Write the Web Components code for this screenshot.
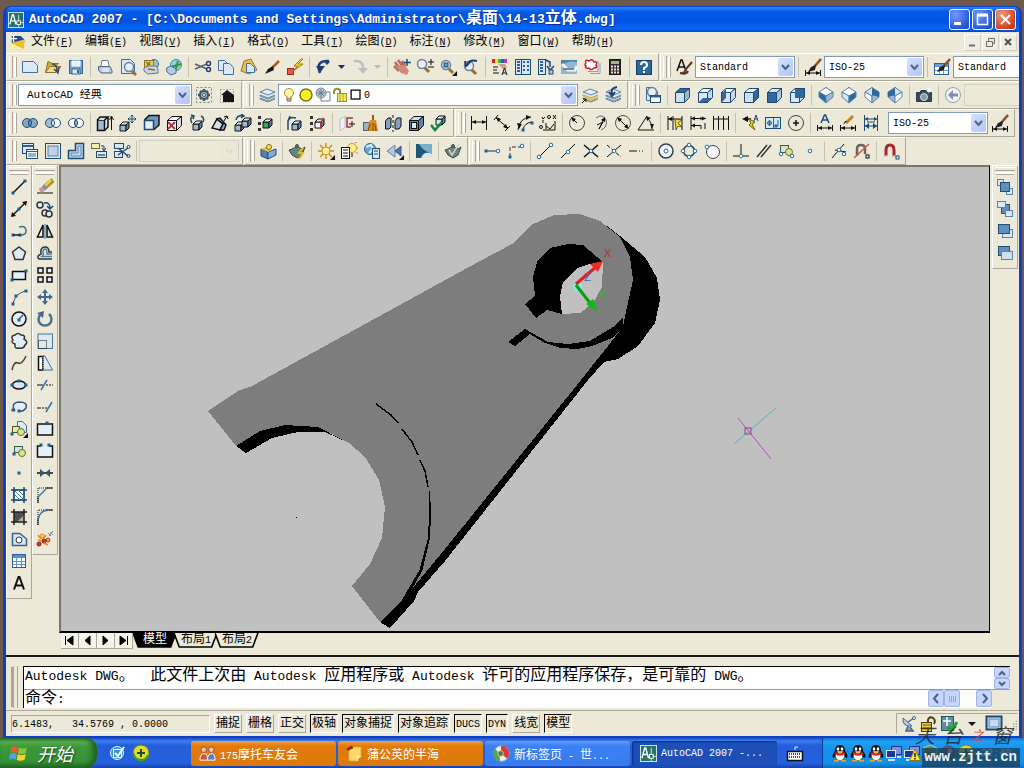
<!DOCTYPE html>
<html lang="zh-CN">
<head>
<meta charset="UTF-8">
<meta name="viewport" content="width=device-width, initial-scale=1">
<title>AutoCAD 2007</title>
<style>
    html, body {
        margin: 0;
        min-height: 100vh;
    }
    body {
        font-family: "Liberation Mono", "Noto Sans CJK SC", monospace;
        background: #6d5a4c;
        overflow: hidden;
    }
    cad-app {
        --face: #ece9d8;
        --shade: #aca899;
        --xp: #0a55e4;
    }
</style>
</head>
<body>
<cad-app></cad-app>

<script>
// ---------- icon helpers ----------
const NAVY = '#1d4a73', MID = '#5b84ad', PALE = '#cfe0ef', INK = '#111';
const p = (d, s = INK, w = 1, f = 'none') => `<path d="${d}" stroke="${s}" stroke-width="${w}" fill="${f}"/>`;
const fill = (d, f) => `<path d="${d}" fill="${f}"/>`;
const c = (x, y, r, s = INK, f = 'none', w = 1) => `<circle cx="${x}" cy="${y}" r="${r}" stroke="${s}" fill="${f}" stroke-width="${w}"/>`;
const r = (x, y, w, h, s = INK, f = 'none', sw = 1) => `<rect x="${x}" y="${y}" width="${w}" height="${h}" stroke="${s}" fill="${f}" stroke-width="${sw}"/>`;
const dot = (x, y) => `<rect x="${x - 1.5}" y="${y - 1.5}" width="3" height="3" fill="#1b6391"/>`;
const node = (x, y) => c(x, y, 1.8, '#1f6ea5', '#fff');
const cube = (f = PALE, t = '#fff', s = '#9dbad4', k = NAVY) =>
    p('M2.500 6.500H11.500V16.500H2.500Z', k, 1, f) + p('M2.500 6.500L7 2.500H16.500L11.500 6.500Z', k, 1, t) + p('M11.500 6.500L16.500 2.500V11.500L11.500 16.500Z', k, 1, s);
const mini = (x, y, f = '#9dbad4') =>
    p(`M${x} ${y + 3}h6v6h-6Z`, INK, 1, f) + p(`M${x} ${y + 3}l3-3h6l-3 3Z`, INK, 1, '#dce8f2') + p(`M${x + 6} ${y + 3}l3-3v6l-3 3Z`, INK, 1, '#5b84ad');
const iso = (a, b, d) => p('M9 1.500L16 7.500L9 16.500L2 7.500Z', NAVY, 1, '#fff')
    + p('M9 1.500L16 6L9 10L2 6Z', MID, 1, a) + p('M2 6L9 10V17L2 11Z', MID, 1, b) + p('M16 6L9 10V17L16 11Z', MID, 1, d);
const wand = x => p('M17 1L10 9', '#8a4f26', 2.500) + fill('M12 7L7 9L4 14L11 12Z', '#222') + x;
const hdim = (y = 14) => p(`M1.500 ${y - 3}v6M16.500 ${y - 3}v6M2 ${y}h14`) + fill(`M2 ${y}l4-2v4ZM16 ${y}l-4-2v4Z`, INK);
const flyout = fill('M18 13V18H13Z', INK);
const star = p('M9 1V17M1 9H17M3 3L15 15M15 3L3 15', '#d28a12', 1.500);
const rings = (a, b, m) => c(6, 9, 4.500, NAVY, a) + c(12, 9, 4.500, NAVY, b) + p('M9 5.600A4.500 4.500 0 0 1 9 12.400A4.500 4.500 0 0 1 9 5.600', NAVY, 1, m);
const lens = (x, y) => p(`M${x + 2} ${y + 3}L${x + 7} ${y + 8}`, '#a56a32', 3) + c(x, y, 4.500, '#69839c', '#e4f0fa', 1.500);
const doc = (x, y, w, h) => p(`M${x} ${y}h${w - 4}l4 4v${h - 4}h-${w}Z`, '#3f6f9a', 1, '#dbe9f6');
const layers = p('M2 6L9 3L17 6L10 9Z', MID, 1, '#e3eefa') + p('M2 9L10 12L17 9M2 12L10 15L17 12M2 9V10L10 13L17 10M2 12V13L10 16L17 13', '#6285a8');
const penguin = fill('M9 1C5 1 4 4 4 7C2 9 1 12 2 14L4 13C5 16 13 16 14 13L16 14C17 12 16 9 14 7C14 4 13 1 9 1Z', '#111')
    + `<ellipse cx="9" cy="12" rx="4.500" ry="4" fill="#fff"/><ellipse cx="7" cy="5" rx="1.300" ry="1.800" fill="#fff"/><ellipse cx="11" cy="5" rx="1.300" ry="1.800" fill="#fff"/>`
    + fill('M5 7H13L9 9Z', '#f7a416') + p('M4 9Q9 12 14 9', '#d8281c', 2.500) + fill('M3 16H8V17.500H3ZM10 16H15V17.500H10Z', '#f7a416');
const monitors = r(6.500, 2.500, 10, 8, '#27348c', '#7d93e0') + r(1.500, 6.500, 9, 7, '#dfe6fa', '#27348c') + p('M3 16H10M12 13H16', '#d7ddee', 2);

const ICONS = {
    app: r(.5, .5, 17, 17, '#d7efe7', '#27736c') + p('M2 14L5 3H6L9 14M3 10H8', '#fff', 1.500) + p('M12 3V12H17M8 12H12V17', '#d8efe9') + r(10, 10, 4, 4, '#fff', '#27736c'),
    doc: fill('M2 1H12L16 5V9H2Z', '#1d4a91') + fill('M1 9L16 5V16H1Z', '#f3c02c') + fill('M1 9L16 16H1Z', '#fff2b0') + p('M4 1V8M1 4H8', '#fff', 1.500),
    new: doc(1.500, 3.500, 15, 11),
    open: fill('M1 14L4 3L8 5H14L12 8Z', '#d2ad3c') + p('M1.500 14.500L4 3.500L8 5.500H14.500L12 8', '#8f7430') + p('M1.500 14.500L6 8.500H17L12 14.500Z', '#8f7430', 1, '#f5de86') + p('M8 6Q13 6 13 13M10 11L14 15L15 9', '#3c4a60', 1.500),
    save: r(2.500, 2.500, 13, 13, '#35659a', '#78a2cc') + r(5, 3, 8, 5, '#fff', '#e8f1fa') + r(5, 11, 8, 5, '#35659a', '#dfeaf5') + fill('M10 12H12V15H10Z', '#35659a'),
    print: p('M5 8L6 2.500H12L13 8', '#697992', 1, '#fff') + p('M2.500 8.500H14L16 12.500V15H5L2.500 12Z', '#53648a', 1, '#b9c6dd') + p('M6 11H13M6 13H13', '#fff'),
    preview: doc(2.500, 1.500, 13, 14) + lens(10, 9),
    publish: c(12, 6, 4.500, '#436b80', '#8dc8df') + r(2.500, 2.500, 9, 7, '#8a7030', '#f0d24a') + p('M2 10L6 8H14L16 11V15L6 16L2 13Z', '#67748a', 1, '#ccd6e6') + p('M4 4L8 7M8 4L5 8M6 11L13 12', '#8e6a1e', 1.500),
    dwf: c(11, 7, 5.500, '#4c8795', '#8fd6dc') + p('M7 8Q12 9 13 3M11 13Q10 7 16 6', '#39944c', 2) + p('M1.500 10L6 8L11 11V15L6 17L2 14Z', '#4d6790', 1, '#b6cbe4'),
    cut: p('M1 6L13 11M1 11L13 6', '#51657a', 1.500) + c(14.500, 5.500, 2, '#243f78', 'none', 1.500) + c(14.500, 11.500, 2, '#243f78', 'none', 1.500),
    copy: doc(1.500, 2.500, 10, 10) + doc(6.500, 5.500, 10, 11),
    paste: p('M4 3L11 1L17 12L9 16L1 13Z', '#9f7621', 1, '#e3c061') + doc(6.500, 5.500, 8, 9),
    brush: p('M16 3L9 10', '#b5551f', 2.500) + fill('M10 8L5 11L2 16L11 12Z', '#191919'),
    matchblock: r(1.500, 10.500, 6, 6, '#9c2722', '#e15942') + p('M15 1L8 8H12L6 14L17 6H12L17 1Z', '#a07b06', 1, '#ffd83a'),
    undo: p('M5 15Q0 2 14 3M14 3L11 6', '#1d3e74', 2.500) + fill('M1 8H10L5 15Z', '#1d3e74'),
    redo: p('M3 3Q13 2 12 12', '#bcbfc0', 2.500) + fill('M7 10H17L12 16Z', '#bcbfc0'),
    down: fill('M5 7H12L8.500 11Z', '#1d2d6c'),
    downoff: fill('M5 7H12L8.500 11Z', '#bbb9ad'),
    pan: p('M2 4L7 11M5 2L10 9M9 3L12 8M1 8L6 13', '#b9695c', 2.500) + fill('M3 9L8 15L14 17L16 13L12 7L7 7Z', '#d08a7b') + p('M14 1V8M11 4.500H18', NAVY, 1.500),
    zoomrt: lens(6, 6) + p('M12 4H18M15 1V7M12 9H18', INK),
    zoomwin: lens(7, 7) + r(5, 5, 4, 4, NAVY, '#6d9bd0') + flyout,
    zoomprev: lens(7, 8) + p('M5 8Q6 1 15 3M8 4L4 8L3 3', '#213c70', 2),
    props: fill('M1 1H4V5H1Z', '#e62121') + fill('M4 1H7V5H4Z', '#eee42c') + fill('M7 1H10V5H7Z', '#35b34a') + fill('M10 1H13V5H10Z', '#2b57db') + fill('M13 1H16V5H13Z', '#c23cc1') + fill('M7 6L13 12L16 10L14 6Z', '#d79c85') + p('M2 9H7M2 12H6M2 15H8M11 17L13.500 10L16 17M12 15H15', INK),
    dc: r(1.500, 1.500, 15, 15, NAVY, '#d9e7f5') + p('M7.500 2V17', NAVY) + p('M3 4H6M3 7H6M3 10H6M3 13H6M9 4H11M13 4H15M9 8H11M13 8H15M9 12H11M13 12H15', '#2f62a0', 2),
    palettes: r(1.500, 1.500, 7, 15, NAVY, '#d9e7f5') + p('M3 4H6M3 7H6M3 10H6M3 13H6', '#2f62a0', 2) + p('M9 2L13 4V9', NAVY, 1.500, '#b2cbe5') + p('M10 8L13 12L17 8', NAVY, 1.500) + r(12, 12, 4, 4, NAVY, '#b2cbe5'),
    sheet: fill('M1 2H17V16H1Z', '#91b8d1') + fill('M1 8Q8 2 17 4V2H1Z', '#4c82aa') + p('M2 6L8 12H15L17 8', '#f2f4f4', 3) + p('M3 11H14', '#778894', 2),
    markup: p('M7 15.500H17V5', '#8c9eb1') + p('M5 13.500H15V3', '#8c9eb1') + p('M3 5Q1 1 6 3Q9 0 11 4Q15 3 13 7Q15 10 11 10Q8 13 6 10Q1 11 3 8Q1 7 3 5Z', '#c82032', 1.500, '#fff'),
    calc: r(3.500, 1.500, 11, 15, '#191919', '#302c2c') + fill('M5 3H13V6H5Z', '#9db78c') + p('M5 8.500H13M5 11.500H13M5 14.500H13', '#e9dfd8', 2).replace('/>', ' stroke-dasharray="2 1"/>'),
    help: r(1.500, 2.500, 15, 14, '#153f68', '#2e6799') + p('M6 7Q6 4 9 4Q12 4 12 7Q12 9 9 10V12M9 13V15', '#fff', 2),
    textstyle: p('M2 13L6 2H7L11 13M4 9H9', INK, 1.500) + p('M17 4L11 11Q9 16 5 15Q11 17 13 13', '#5b3720', 2),
    dimstyle: wand(hdim(15)),
    tablestyle: r(1.500, 5.500, 14, 11, '#2f609b', '#fff') + fill('M2 6H15V9H2Z', '#6a9bd4') + p('M2 12.500H15M6.500 6V16M10.500 6V16', '#6a9bd4') + wand(''),
    gear: r(1.500, 1.500, 15, 15, '#72858f').replace('/>', ' stroke-dasharray="2 2"/>') + p('M9 3V15M3 9H15M5 5L13 13M13 5L5 13', '#41576b', 2.500) + c(9, 9, 4, '#41576b', '#a5b7c4', 2) + c(9, 9, 1.500, '#41576b', '#fff'),
    house: r(2.500, 3.500, 13, 13, '#767d80').replace('/>', ' stroke-dasharray="1 2"/>') + fill('M3 9L9 4L16 9V16H5V9Z', '#151515'),
    layers,
    layercur: layers + fill('M2 9L10 12L17 9V12L10 15L2 12Z', '#e1c84d') + p('M1 17L5 13M2 13H5V16', INK),
    layerprev: layers + p('M13 1Q6 2 8 8M5 6L8 10L11 6', '#233f72', 2),
    bulb: c(9, 7, 4.500, '#af8f1f', '#fff7ac') + p('M7 11V15H11V11M7 13H11', '#72705d', 1, '#ddd'),
    sun: c(9, 9, 6, '#7c741f', '#f4ef27', 1.500),
    freeze: p('M7 6H16V15H7Z', '#6f7e8d', 1, '#fff') + c(7, 7, 5, '#7b8b9a', '#bdcbd5') + p('M7 3V11M3 7H11M4 4L10 10M10 4L4 10', '#65798c'),
    lock: p('M3 8V5Q5 1 9 4V8', '#96901d', 2) + r(6.500, 7.500, 9, 8, '#a19419', '#f3e96c') + p('M9 8V15M12 8V15', '#b4a728'),
    swatch: r(3.500, 3.500, 10, 10, INK, '#fff', 1.500),
    union: rings('#82a9c3', '#82a9c3', '#6796b6'),
    subtract: rings('#9dc1d4', '#fff', '#e9f3f8'),
    intersect: rings('#fff', '#fff', '#8db4cd'),
    extrude: p('M1.500 6H8.500V16.500H1.500Z', INK, 1.500, '#9dbad4') + p('M1.500 6L4 3H12L8.500 6M8.500 16.500L12 13V3', INK, 1.500, '#cfe0ef') + p('M15.500 16V3M13.500 6L15.500 2L17.500 6'),
    moveface: mini(1, 8) + p('M13 1V9M9 5H17M11.500 2.500L13 1L14.500 2.500M11.500 7.500L13 9L14.500 7.500M10.500 3.500L9 5L10.500 6.500M15.500 3.500L17 5L15.500 6.500', NAVY),
    offsetface: p('M2.500 6L7 1.500H17V11L12 15.500', INK, 1.500, '#6f9ac0') + r(2.500, 6.500, 9, 9, NAVY, '#e3edf6', 1.500),
    deleteface: cube('#fff', '#fff', '#ddd', INK) + p('M3 8L10 15M10 8L3 15', '#c3293a', 2),
    rotateface: mini(5, 7) + p('M4 9Q1 4 5 2M3 1L6 2L5 5M13 2Q17 4 15 8', NAVY, 1.500),
    taperface: p('M1 14L6 5L12 10L9 16Z', INK, 1.500, '#d2dfeb') + p('M6 5L9 4L15 11L13 16H9L12 10Z', INK, 1.500, '#8da8c2') + p('M13 7L16 2M13 3L16 2L17 5'),
    copyface: mini(1, 8) + mini(8, 4) + p('M2 6Q3 1 9 2M7 0L10 2L7 4', NAVY, 1.500),
    colorface: fill('M1 2H4V5H1ZM1 8H4V11H1ZM1 14H4V17H1Z', '#333') + mini(6, 5, '#2fab58'),
    copyedge: mini(6, 7) + p('M2 16V7Q4 2 10 4M2 7L4 2', NAVY, 1.500),
    coloredge: fill('M1 2H4V5H1ZM1 8H4V11H1ZM1 14H4V17H1Z', '#333') + mini(6, 5, '#fff') + p('M12 15V8L15 4', '#d22f35', 1.500),
    imprint: p('M2 5L7 2V13L2 17Z', '#b5bdd0', 1, '#f6eef5') + p('M15 4H9V13H13', '#9e3441', 1.500) + p('M14 7V13M11 10H17'),
    clean: r(2.500, 8.500, 8, 8, '#536275', '#9db1c7') + p('M12 1V7', '#9b5819', 2) + fill('M9 6H15L17 17H6Z', '#d98b20') + p('M9 10L7 17M12 9V17M14 10L15 17', '#7c4b14'),
    separate: p('M1.500 7L4 4H7V13L5 15H1.500ZM11 7L13 4H17V12L15 15H11Z', INK, 1, '#7fa0bf') + p('M9 1V18', INK).replace('/>', ' stroke-dasharray="3 2"/>'),
    shell: cube('#5f86aa', '#cfe0ef', '#5b84ad', INK) + r(4.500, 8.500, 5, 6, INK, '#dce8f2'),
    check: mini(6, 2, '#d5e3ef') + p('M1 11L5 16L12 8', '#0b8446', 2.500),
    dimlinear: p('M1.500 2V16M16.500 2V16M2 8H16') + fill('M2 8L6 6V10ZM16 8L12 6V10Z', INK),
    dimaligned: p('M1 6L5 1M12 17L17 12M3 4L15 14') + fill('M3 3L8 5L5 8ZM15 15L10 13L13 10Z', INK),
    dimarc: p('M2 16Q3 4 15 3M7 16Q8 9 16 8') + fill('M3 15L1 9L6 10ZM15 3L10 1V6Z', INK) + dot(7, 16) + dot(16, 9),
    dimord: p('M4 16H16V7M7 15V9M7 12L11 15L15 10M4 6V9M3 3L4 5L6 3M14 1L17 5M17 1L14 5') + c(10, 3, 1.500) + c(2, 13, 1.500),
    dimradius: c(9, 9, 7.500, '#444') + p('M9 9L4 4') + fill('M3 3L8 5L5 8Z', INK),
    dimjog: p('M5 4Q12 -1 15 6Q17 13 10 16', '#666') + p('M6 11L12 8L8 15L13 5') + fill('M14 3L14 8L10 6Z', INK),
    dimdia: c(9, 9, 7.500, '#555') + p('M4 4L14 14') + fill('M3 3L8 5L5 8ZM15 15L10 13L13 10Z', INK),
    dimang: p('M1 16H17M1 16L10 2M10 4Q15 8 15 15') + fill('M9 2L14 4L10 7ZM15 15L13 10H17Z', INK),
    qdim: p('M2 2V16M7 2V16M16 2V16M2 5H16') + fill('M2 5L6 3V7Z', INK) + p('M9 5L16 6L12 9L16 13L12 12L10 16Z', '#6b5b08', 1, '#efdb2c'),
    dimbase: p('M2 2V16M12 3V6M16 9V15M2 4.500H17M2 11.500H12V15') + fill('M2 4.500L6 2.500V6.500ZM17 4.500L13 2.500V6.500ZM2 11.500L6 9.500V13.500Z', INK),
    dimcont: p('M1.500 2V16M6.500 2V16M11.500 2V16M16.500 2V16M2 5H16'),
    leader: fill('M1 5L7 2V8Z', INK) + p('M4 5H10', INK, 1.500) + p('M8 5L14 8L11 10L14 16L8 11L10 9Z', '#6b5b08', 1, '#e8d52c') + p('M13 7L15 1L17 7M14 5H17', NAVY),
    tolerance: r(1.500, 3.500, 15, 11, NAVY, '#d6e6f5') + p('M9.500 4V14M3 9H8M5.500 6V12M14 6V12', '#28669a') + c(5.500, 9, 2, '#28669a') + dot(12, 12),
    center: c(9, 9, 7.500, '#444') + p('M9 6V12M6 9H12', INK, 1.500),
    dimedit: hdim() + p('M5 9L8.500 1H9.500L13 9M6 6H12', '#1f4f7c', 1.500),
    dimtedit: hdim() + p('M14 2L7 9', '#c68220', 3) + fill('M8 7L4 11L6 7Z', INK),
    dimupdate: p('M2.500 1V17M15.500 1V17M3 5H15M3 12H15M5 8H13', NAVY) + fill('M3 12L7 9V15ZM15 12L11 9V15ZM3 5L6 3V7ZM15 5L12 3V7Z', NAVY),
    vpdialog: r(1.500, 1.500, 11, 10, NAVY, '#dceaf7') + p('M2 4H12', '#2f6197', 2) + r(5.500, 7.500, 11, 9, NAVY, '#fff') + p('M6 9.500H16M7 12H15M7 14H15', '#2f6197'),
    vpsingle: r(1.500, 1.500, 15, 15, NAVY) + r(4, 4, 10, 10, MID, '#bdd4e8'),
    vppoly: p('M8.500 1.500H16.500V16.500H1.500V8.500H8.500Z', NAVY, 1.500, '#c5d9ea') + p('M11 4H14V14H4V11H11Z', MID),
    vpobject: r(1.500, 1.500, 8, 5, '#6c6c3a', '#f2efb4') + p('M11 4H14V8M12 6L14 9L16 6', NAVY) + r(6.500, 9.500, 10, 6, NAVY, '#dbe8f4') + p('M8 13H15', MID, 2),
    vpclip: r(1.500, 1.500, 9, 5, NAVY, '#dbe8f4') + r(1.500, 9.500, 8, 6, NAVY, '#dbe8f4') + p('M5 6L15 14M5 13L15 6', NAVY, 1.500) + c(15.500, 5, 1.500, NAVY) + c(15.500, 14, 1.500, NAVY),
    namedview: doc(2.500, 1.500, 11, 13) + lens(8, 6) + r(6.500, 9.500, 10, 7, NAVY, '#fff') + p('M7 10.500H16', '#2f6197', 2),
    vtop: cube(PALE, '#2f689c'), vbottom: cube('#dbe8f3', '#f4f8fb', '#c5d8e8') + fill('M3 16L7 12H16L11 16Z', '#2f689c'),
    vleft: cube('#dbe8f3', '#f4f8fb', '#c5d8e8') + fill('M3 7L7 3V12L3 16Z', '#2f689c'), vright: cube(PALE, '#fff', '#2f689c'),
    vfront: cube('#2f689c', '#e1edf5', '#a9c5dc'), vback: cube('#dbe8f3', '#f4f8fb', '#c5d8e8') + fill('M7 3H16V12H7Z', '#2f689c'),
    iso1: iso('#fff', '#2f689c', '#9dbad4'), iso2: iso('#fff', '#d4e4f0', '#2f689c'),
    iso3: iso('#d4e4f0', '#fff', '#9dbad4') + fill('M9 2L16 6V11L9 9Z', '#2f689c'), iso4: iso('#d4e4f0', '#9dbad4', '#fff') + fill('M9 2L2 6V11L9 9Z', '#2f689c'),
    camera: p('M1.500 6.500H5L6 4.500H11L12 6.500H16.500V15.500H1.500Z', '#273a49', 1, '#394a58') + c(9, 11, 3.500, '#ddd', '#889ba9') + p('M14 1V7M11 4H17M12 2L16 6M16 2L12 6', '#f6fafc'),
    back: c(9, 9, 7.500, '#8f9eb0', '#f2f5f8') + p('M9 9H14', '#8292a5', 3) + fill('M4 9L9 4V14Z', '#8292a5'),
    hide: p('M2 7L9 10V17L2 14Z', '#274e80', 1, '#5380b3') + p('M9 10L17 7V13L9 17Z', '#274e80', 1, '#83acd4') + fill('M2 7L8 4L13 8L9 10Z', '#e3c44b') + c(10, 5, 2.500, '#8d7112', '#f3dd63'),
    render: c(9, 4, 1.500, '#335048', '#69867b') + p('M4 7Q9 3 14 7L17 5L14 13L9 16L4 13L1 8Z', '#335048', 1, '#69867b') + p('M15 6L11 11H15L11 17', '#e2bd28', 2),
    light: star + c(9, 9, 4, '#c99015', '#fff3a2') + flyout,
    lightlist: c(12, 6, 4.500, '#c79b22', '#ffef8e') + r(1.500, 5.500, 8, 11, INK, '#fff') + p('M3 8H8M3 11H8M3 14H8M12 11V15') + p('M16 10L18 12M17 6H18M15 1L17 0', '#d28a12'),
    material: c(7, 7, 5.500, '#286a9c', '#63a5d3') + p('M3 5L8 3L10 7L6 11', '#dcecf7', 2) + r(9.500, 6.500, 7, 10, NAVY, '#dceaf7') + p('M11 9H15M11 12H15', NAVY),
    mapping: p('M1 9L9 3V15Z', '#6980aa', 1, '#b6c6df') + p('M9 9L15 4V14Z', '#3a578d', 1, '#5274ad') + flyout,
    environment: fill('M1 2H17V16H1Z', '#1f567c') + fill('M4 2Q8 9 17 12V2Z', '#78afc4') + fill('M6 16Q9 8 17 12V16Z', '#d9e9ee'),
    advrender: c(9, 4, 1.500, '#335048', '#69867b') + p('M4 7Q9 3 14 7L17 5L14 13L9 16L4 13L1 8Z', '#335048', 1, '#69867b') + p('M5 8L8 13L15 2', '#d2d2c6', 1.500),
    track: p('M3 9H13', '#333') + dot(2, 9) + node(14, 9),
    from: p('M3 15V5H14', '#333').replace('/>', ' stroke-dasharray="4 2"/>') + node(15, 4) + dot(3, 15),
    endpoint: p('M3 15L15 3') + node(15, 3) + node(3, 15),
    midpoint: p('M2 16L16 2') + node(9, 10),
    inters: p('M2 3L16 15M2 15L16 3', INK, 1.500) + node(9, 9),
    appint: p('M2 15L16 3') + p('M2 3L16 15').replace('/>', ' stroke-dasharray="4 2"/>') + node(9, 9),
    ext: p('M1 9H8') + p('M8 9H17').replace('/>', ' stroke-dasharray="1 2"/>'),
    osncenter: c(9, 9, 7, '#35434f', '#eef5fb', 1.500) + c(9, 9, 2, '#1f6ea5', '#fff'),
    quad: c(9, 9, 5.500, '#35434f', 'none', 1.500) + node(9, 3) + node(9, 15) + node(3, 9) + node(15, 9),
    tangent: c(10, 10, 6.500, '#35434f', '#f3f5f6') + node(4, 5),
    perp: p('M1 14H17M9 14V2') + node(9, 14),
    parallel: p('M2 15L12 3M6 15L16 3', '#333', 1.500),
    insertion: r(2.500, 3.500, 8, 7, '#345d4b', '#d8e8c9') + c(11, 10, 3.500, '#637126', '#dfe390') + node(3, 12) + node(14, 14),
    nodesnap: node(9, 9),
    nearest: p('M2 16L14 2M5 8L16 10') + node(9, 8) + node(14, 12),
    none: p('M4 14V7Q4 3 8 3Q12 3 12 7V12', '#6a6560', 2.500) + p('M1 16L16 2', '#d05742', 1.500) + r(13, 13, 3, 3),
    magnet: p('M4 15V8Q4 3 8 3Q12 3 12 8V15', '#a62430', 3) + p('M2.500 14.500H6M10.500 14.500H13.500', '#ddd', 2) + r(14, 14, 3, 3, NAVY),

    line: p('M3 15L15 3', INK, 1.500) + dot(3, 15) + dot(15, 3),
    xline: p('M2 16L16 2', INK, 1.500) + dot(9, 9) + fill('M1 17L2 12L6 16ZM17 1L12 2L16 6Z', INK),
    pline: p('M3 13H10M9 5Q16 3 16 9Q16 13 11 13', '#456c90', 1.500) + dot(3, 13) + dot(10, 13) + p('M3 13H10'),
    polygon: p('M9 3L15.500 8L13 15.500H5L2.500 8Z', '#333', 1.500, '#dce8f3'),
    rectangle: r(2.500, 5.500, 13, 8, INK, '#e4eff9', 1.500) + dot(2, 14) + dot(16, 5),
    arc: p('M3 16Q5 5 16 3', '#445') + dot(3, 16) + dot(6, 8) + dot(16, 3),
    circle: c(9, 9, 7, INK, '#e6eff8', 1.500) + p('M9 9L13 5', '#1b6391', 1.500) + dot(9, 10),
    cloud: p('M5 3Q8 0 11 3Q16 3 14 7Q19 10 15 13Q14 17 9 16Q4 17 5 12Q0 10 3 8Q0 4 5 3Z', '#333', 1.500, '#e3edf6'),
    spline: p('M2 16Q4 7 8 9T16 2', '#444', 1.500),
    ellipse: `<ellipse cx="9" cy="9" rx="6.500" ry="4" stroke="${INK}" stroke-width="1.500" fill="#d6e5f2"/>` + dot(2, 9) + dot(16, 9) + dot(9, 5),
    earc: p('M5 13Q0 5 9 4Q18 4 16 10Q13 14 9 13', '#36577c', 1.500, '#e4eef7') + dot(3, 12) + dot(9, 13),
    insert: doc(7.500, 1.500, 9, 11) + r(2.500, 6.500, 7, 6, '#455b2c', '#e3e9ab') + c(11, 12, 3.500, '#637126', '#dfe390') + dot(2, 14) + flyout,
    block: r(4.500, 4.500, 8, 6, '#345d4b', '#cfe2ea') + c(12, 11, 3.500, '#637126', '#dfe390') + dot(4, 12),
    point: dot(9, 9),
    hatch: r(4, 4, 10, 10, NAVY, '#fff') + p('M4 1V17M14 1V17M1 4H17M1 14H17', NAVY, 1.500) + p('M4 8L10 14M5 5L14 14M8 4L14 10', '#407cad'),
    gradient: fill('M4 4H14V14H4Z', '#4b4f52') + fill('M14 7V14H7Z', '#b6b087') + p('M4 1V17M14 1V17M1 4H17M1 14H17', '#222', 1.500),
    region: p('M2.500 3.500H10L16.500 9V15.500H2.500Z', '#3b658d', 1.500, '#d6e5f2') + c(9, 10, 3, '#333', '#fff'),
    table: r(2.500, 2.500, 13, 13, '#2f5c9c', '#fff') + fill('M3 3H15V6H3Z', '#5b8fd0') + p('M3 9.500H15M3 12.500H15M6.500 6V15M11.500 6V15', '#5b8fd0'),
    mtext: p('M4 15.500L8.500 3H9.500L14 15.500M5.500 11.500H12.500', INK, 2),
    erase: p('M1 15H17') + p('M17 2L9 9', '#b79420', 5) + p('M15 2L9 8', '#f0d65c', 2) + p('M10 8L7 11', '#7996b7', 5) + p('M7 11L4 13', '#d78d88', 5),
    copyobj: c(4, 5, 3, '#333', '#dce8f3', 1.500) + c(9, 13, 3, '#333', '#dce8f3', 1.500) + c(13, 14, 3, '#333', '#dce8f3', 1.500) + p('M8 3Q14 2 14 8M11 6L14 9L17 6', NAVY, 1.500),
    mirror: p('M7 3V15H1.500Z', INK, 1.500, '#eef5fa') + p('M11 3V15H16.500Z', INK, 1.500, '#cfe0ef') + p('M9 2V17', '#2874ab'),
    offset: p('M16 15H3Q0 12 5 10Q4 3 9 3Q13 3 13 8H16', '#333', 1.500) + p('M16 12.500H6Q8 11 7 8Q7 5 9 5Q11 5 11 10H16', '#4681ac', 1.500),
    array: r(2, 2, 5, 5, INK, '#e4eff9', 1.500) + r(11, 2, 5, 5, INK, '#e4eff9', 1.500) + r(2, 11, 5, 5, INK, '#e4eff9', 1.500) + r(11, 11, 5, 5, INK, '#e4eff9', 1.500),
    move: p('M9 3V15M3 9H15', '#3f6b95', 2) + fill('M9 1L12 5H6ZM9 17L12 13H6ZM1 9L5 6V12ZM17 9L13 6V12Z', '#3f6b95'),
    rotate: p('M5 4A6.500 6.500 0 1 0 13 4', '#4b7196', 2.500) + fill('M1 3L8 1L7 8Z', '#3f6b95'),
    scale: r(2, 2, 14.500, 14.500, '#4b7196', '#dce9f5') + r(2.500, 8.500, 8, 8).replace('/>', ' stroke-dasharray="1 1"/>'),
    stretch: p('M2.500 2.500H7V16H2.500Z', INK, 1.500, '#fff') + p('M9 2L16.500 16H7V2Z', '#4b7196', 1, '#dce9f5') + p('M7 2V16').replace('/>', ' stroke-dasharray="1 1"/>'),
    trim: p('M1 9H7') + p('M10 9H17').replace('/>', ' stroke-dasharray="2 1"/>') + p('M5 14L11 4', '#3276ac', 1.500),
    extend: p('M1 10H5') + p('M6 10H12').replace('/>', ' stroke-dasharray="2 1"/>') + p('M10 14L16 4', '#3276ac', 1.500),
    breakpt: r(1.500, 4, 15, 11, INK, '#e4eff9', 1.500) + dot(11, 3),
    break: p('M5 4H1.500V15H16.500V4H13', INK, 1.500, '#e4eff9') + dot(5, 3) + dot(13, 3),
    join: p('M1 9H17', INK, 1.500) + fill('M9 9L4 5V13ZM9 9L14 5V13Z', '#36536d'),
    chamfer: p('M2 17V2H17').replace('/>', ' stroke-dasharray="1 1"/>') + p('M2 17V11M10 2H17') + p('M2 11L10 3', '#3276ac', 1.500),
    fillet: p('M2 17V2H17').replace('/>', ' stroke-dasharray="1 1"/>') + p('M2 17V11M10 2H17') + p('M2 12Q3 3 12 2', '#3276ac', 1.500),
    explode: c(6, 6, 2, '#e8881f', '#ffd053') + c(12, 10, 2, '#c23c20', '#ff9338') + c(3, 14, 2, '#8c1e18', '#cf3925') + c(8, 11, 2, '#8c1e18', '#cf3925') + p('M2 5L5 9M10 5L7 9M12 15L8 13M2 10L6 11', '#e8881f', 1.500) + p('M13 6L17 1M14 2L17 5M12 3L15 6', '#78899c'),

    front: r(1.500, 1.500, 6, 6, MID, '#dbe9f4') + r(10.500, 10.500, 6, 6, MID, '#dbe9f4') + r(4.500, 4.500, 9, 9, '#254f78', '#5f8fbd'),
    behind: r(5.500, 4.500, 8, 9, '#254f78', '#5f8fbd') + r(1.500, 1.500, 8, 6, MID, '#dbe9f4') + r(9.500, 10.500, 7, 6, MID, '#dbe9f4'),
    above: r(6.500, 7.500, 10, 8, MID, '#dbe9f4') + r(2.500, 2.500, 11, 9, '#254f78', '#5f8fbd'),
    under: r(2.500, 2.500, 11, 9, '#254f78', '#5f8fbd') + r(5.500, 7.500, 11, 8, MID, '#cfdfec'),

    dish: p('M3 3Q2 12 12 11Z', '#47648b', 1, '#bfcde0') + p('M8 7L14 3M8 11L6 16H13L10 12', '#47648b', 1.500, '#8da4c4') + c(14, 3, 1.500, '#47648b', '#fff'),
    padlock: p('M8 8V5Q9 1 13 3Q16 5 14 9', '#473f20', 2) + r(1.500, 7.500, 10, 9, '#4b4012', '#eac938') + p('M3 10H11M3 13H11', '#765f12'),
    plotok: r(1.500, 1.500, 12, 14, '#245462', '#579399') + p('M7 2V11M3 6H11', '#fff', 1.500) + p('M8 12L11 16L17 7', '#25a12d', 3),
    menu: fill('M5 7H13L9 11Z', INK),
    screen: r(1.500, 1.500, 15, 13, NAVY, '#d3e6f5', 2) + r(4, 4, 10, 8, MID, '#c2dbef'),
    grip: `<path d="M17 4V17H4M17 8V17M13 8V17" stroke="#aaa694" stroke-width="2" stroke-dasharray="2 2" fill="none"/>`,
    ie: c(9, 9, 6.500, '#e6f4ff', '#3d91d8') + r(5.500, 5.500, 8, 8, '#e6f4ff', '#3d91d8') + p('M7 9L10 12L16 3', '#fff', 2),
    plus: c(9, 9, 8, '#668a16', '#e4d72d') + p('M1.500 9A7.500 7.500 0 0 0 16 11', '#389d28', 2) + p('M9 5V13M5 9H13', '#1a512a', 2),
    people: c(5, 5, 3, '#9d4d2c', '#f2c2a3') + c(13, 5, 3, '#9d4d2c', '#f2c2a3') + p('M1 16Q1 9 6 9Q9 9 9 16Z', '#fff', 1, '#d9503a') + p('M9 16Q9 9 14 9Q17 10 17 16Z', '#fff', 1, '#5282cb'),
    note: p('M3 2H16V12L12 17H3Z', '#d99b22', 1, '#ffd869') + p('M1 5L7 2', '#9c281c', 3) + p('M12 17V12H16', '#fff5c5'),
    browser: c(9, 9, 8, '#bcd6ca', '#eff1ef') + p('M9 1A8 8 0 0 1 15 14L9 9Z', '#d83a42', 1, '#d83a42') + p('M2 4A8 8 0 0 0 7 17L6 9Z', '#56a94c', 1, '#56a94c') + c(8, 9, 3, '#e9d768', '#536a7a'),
    keyboard: p('M9 5V2H12', '#e6edff') + r(1.500, 6.500, 15, 9, INK, '#fff', 1.500) + p('M3 9H15M3 12H15', INK, 1.500).replace('/>', ' stroke-dasharray="1 1"/>'),
    penguin,
    monitors,
    warn: monitors + p('M12 5L17.500 16.500H6.500Z', '#917216', 1, '#ffe93d') + p('M12 9V13M12 14V15.500', INK, 1.500),
    shield: p('M9 1L16 4Q16 14 9 17Q2 14 2 4Z', '#b3d0a7', 1, '#5d8b59'),
    ball: c(9, 9, 7, '#43506e', '#6d5565') + c(11, 7, 2, '#ddd', '#c8ced8'),
    flag: fill('M2 4Q5 2 8 4L7 9Q4 7 1 9Z', '#f05a28') + fill('M9 4Q12 6 16 4L15 9Q11 11 8 9Z', '#8cc63e') + fill('M1 10Q4 8 7 10L6 15Q3 13 0 15Z', '#4fa5f5') + fill('M8 10Q11 12 15 10L14 15Q10 17 7 15Z', '#fdd32a')
};

const svg = (name, size = 18) => `<svg width="${size}" height="${size}" viewBox="0 0 18 18" aria-hidden="true">${ICONS[name] || ''}</svg>`;

// CJK runs are set larger than the Latin ones, as in a half-width bitmap font
const mix = text => text.replace(/[\u3000-\u303f\u4e00-\u9fff\uff00-\uffef]+/g, m => `<span class="cjk">${m}</span>`);
const MIX_CSS = '.cjk { font-size: var(--cjk, 12px); }';

class CadIcon extends HTMLElement {
    connectedCallback() {
        this.attachShadow({ mode: 'open' }).innerHTML = `
            <style>
                :host { display: inline-flex; flex: none; }
                svg { display: block; }
            </style>
            ${svg(this.getAttribute('name'), this.getAttribute('size') || 18)}
        `;
    }
}
customElements.define('cad-icon', CadIcon);

class CadTool extends HTMLElement {
    connectedCallback() {
        const name = this.getAttribute('icon');
        this.attachShadow({ mode: 'open' }).innerHTML = `
            <style>
                :host { display: block; flex: none; width: 23px; height: 22px; }
                :host([narrow]) { width: 13px; }
                button {
                    display: flex;
                    align-items: center;
                    justify-content: center;
                    width: 100%;
                    height: 100%;
                    padding: 0;
                    border: 0;
                    background: none;
                }
                button:hover { background: #dfe6ee; }
                svg { flex: none; }
            </style>
            <button type="button" aria-label="${name}">${svg(name)}</button>
        `;
    }
}
customElements.define('cad-tool', CadTool);

class CadSelect extends HTMLElement {
    connectedCallback() {
        const off = this.hasAttribute('disabled');
        this.attachShadow({ mode: 'open' }).innerHTML = `
            <style>
                :host { display: grid; flex: none; width: var(--w, 100px); height: 22px; }
                select, .face { grid-area: 1 / 1; }
                select {
                    appearance: none;
                    min-width: 0;
                    padding: 0 0 0 var(--pad, 4px);
                    border: 1px solid #7f9db9;
                    border-radius: 0;
                    background: #fff;
                    color: #000;
                    font: var(--size, 10px) "Liberation Mono", "Noto Sans CJK SC", monospace;
                }
                select:disabled { background: var(--face); border-color: #c9c7ba; }
                .face {
                    display: flex;
                    justify-self: end;
                    align-items: center;
                    justify-content: center;
                    width: 15px;
                    margin: 2px;
                    border-radius: 2px;
                    background: linear-gradient(135deg, #d5e0fd, #b2c6f5);
                    pointer-events: none;
                }
                :host([disabled]) .face { background: #eeece3; box-shadow: inset 0 0 0 1px #dedbd0; }
                :host([plain]) .face { display: none; }
                .lead { grid-area: 1 / 1; display: flex; align-items: center; justify-self: start; padding-left: 2px; pointer-events: none; }
            </style>
            <select aria-label="${this.getAttribute('label')}" ${off ? 'disabled' : ''}>
                <option>${this.getAttribute('value') || ''}</option>
            </select>
            <span class="lead"><slot></slot></span>
            <span class="face">
                <svg width="9" height="9" viewBox="0 0 9 9"><path d="M1 2L4.500 6L8 2" fill="none" stroke="${off ? '#c5c2b4' : '#4d6185'}" stroke-width="2"/></svg>
            </span>
        `;
    }
}
customElements.define('cad-select', CadSelect);

// A dockable band: gripper, then whatever tools are slotted in
class CadBand extends HTMLElement {
    connectedCallback() {
        this.attachShadow({ mode: 'open' }).innerHTML = `
            <style>
                :host {
                    display: flex;
                    align-items: center;
                    flex: none;
                    box-sizing: border-box;
                    height: 28px;
                    padding: 0 3px 0 2px;
                    border: solid;
                    border-width: 1px;
                    border-color: #fff var(--shade) var(--shade) #fff;
                }
                :host([vertical]) { flex-direction: column; height: auto; width: 26px; padding: 1px 1px 4px 0; }
                .grip {
                    width: 2px;
                    height: 22px;
                    margin-right: 5px;
                    border-right: 1px solid var(--shade);
                    border-left: 1px solid #fff;
                    box-shadow: 4px 0 0 -1px #fff, 5px 0 0 -1px var(--shade);
                }
                :host([vertical]) .grip {
                    width: 20px;
                    height: 2px;
                    margin: 0 0 5px;
                    border: solid;
                    border-width: 1px 0;
                    border-color: #fff var(--shade) var(--shade) #fff;
                    box-shadow: 0 4px 0 -1px #fff, 0 5px 0 -1px var(--shade);
                }
                ::slotted(hr) {
                    width: 1px;
                    height: 20px;
                    margin: 0 2px 0 3px;
                    border: 0;
                    background: #c5c2b2;
                }
            </style>
            <span class="grip"></span><slot></slot>
        `;
    }
}
customElements.define('cad-band', CadBand);

// Turns "new open | save" into tools and separators
const tools = list => list.split(' ').map(n => n === '|' ? '<hr>' : `<cad-tool icon="${n}" ${/^down/.test(n) ? 'narrow' : ''}></cad-tool>`).join('');

class CadTitle extends HTMLElement {
    connectedCallback() {
        this.attachShadow({ mode: 'open' }).innerHTML = `
            <style>
                :host {
                    --cjk: 16px;
                    display: flex;
                    align-items: center;
                    height: 25px;
                    padding: 0 3px 0 2px;
                    background: linear-gradient(#2a86ff, #0558e6 20%, #0353e0 60%, #0468fa 85%, #0347c4);
                    color: #fff;
                    font-weight: bold;
                    font-size: 13px;
                    line-height: 24px;
                    text-shadow: 1px 1px #0b2f8e;
                }
                ${MIX_CSS}
                .text { flex: 1; padding-left: 5px; white-space: pre; }
                .buttons { display: flex; gap: 2px; }
                button {
                    display: flex;
                    width: 21px;
                    height: 21px;
                    padding: 0;
                    align-items: center;
                    justify-content: center;
                    border: 1px solid #fff;
                    border-radius: 3px;
                    background: radial-gradient(circle at 30% 25%, #6f9bf8, #2355d8 75%);
                }
                .close { background: radial-gradient(circle at 30% 25%, #ee9a82, #cf3f1b 75%); }
            </style>
            <cad-icon name="app" size="16"></cad-icon>
            <span class="text">${mix('AutoCAD 2007 - [C:\\Documents and Settings\\Administrator\\桌面\\14-13立体.dwg]')}</span>
            <div class="buttons">
                <button type="button" aria-label="最小化"><svg width="15" height="15"><path d="M2 11.500H9" stroke="#fff" stroke-width="3"/></svg></button>
                <button type="button" aria-label="最大化"><svg width="15" height="15"><path d="M2.500 3V12.500H12.500V3M2 3.500H13" fill="none" stroke="#fff" stroke-width="1.500"/><path d="M2 3H13" stroke="#fff" stroke-width="3"/></svg></button>
                <button type="button" class="close" aria-label="关闭"><svg width="15" height="15"><path d="M3 3L12 12M12 3L3 12" stroke="#fff" stroke-width="2"/></svg></button>
            </div>
        `;
    }
}
customElements.define('cad-title', CadTitle);

class CadMenu extends HTMLElement {
    connectedCallback() {
        const menus = [['文件', 'F'], ['编辑', 'E'], ['视图', 'V'], ['插入', 'I'], ['格式', 'O'], ['工具', 'T'], ['绘图', 'D'], ['标注', 'N'], ['修改', 'M'], ['窗口', 'W'], ['帮助', 'H']];
        this.attachShadow({ mode: 'open' }).innerHTML = `
            <style>
                :host { display: flex; align-items: center; height: 21px; padding: 0 2px 0 4px; background: var(--face); }
                ${MIX_CSS}
                nav { display: flex; flex: 1; padding-left: 3px; }
                nav button { padding: 0 6px; border: 0; background: none; font-family: inherit; font-size: 10px; line-height: 20px; color: #000; }
                nav button:first-child { padding-left: 2px; }
                .doc { display: flex; gap: 1px; }
                .doc button { width: 17px; height: 17px; padding: 0; border: solid; border-width: 1px; border-color: #fff #d6d2c2 #d6d2c2 #fff; background: #efede3; }
                .doc svg { display: block; margin: auto; }
            </style>
            <cad-icon name="doc" size="16"></cad-icon>
            <nav>${menus.map(m => `<button type="button">${mix(m[0])}(<u>${m[1]}</u>)</button>`).join('')}</nav>
            <div class="doc">
                <button type="button" aria-label="最小化图形"><svg width="11" height="11"><path d="M2 8.500H8" stroke="#716f64" stroke-width="2"/></svg></button>
                <button type="button" aria-label="还原图形"><svg width="11" height="11"><path d="M3.500 4V1.500H9.500V6.500H8M1.500 4.500H7.500V9.500H1.500Z" fill="none" stroke="#716f64"/></svg></button>
                <button type="button" aria-label="关闭图形"><svg width="11" height="11"><path d="M2 2L8 8M8 2L2 8" stroke="#56544c" stroke-width="2"/></svg></button>
            </div>
        `;
    }
}
customElements.define('cad-menu', CadMenu);

class CadToolbars extends HTMLElement {
    connectedCallback() {
        this.attachShadow({ mode: 'open' }).innerHTML = `
            <style>
                :host { display: block; background: var(--face); }
                .row { display: flex; overflow: hidden; height: 28px; gap: 1px; }
                .combo { display: flex; align-items: center; }
                .combo cad-icon { margin-right: -1px; }
                .apart { margin-left: 6px; }
            </style>
            <div class="row">
                <cad-band>${tools('new open save | print preview publish dwf | cut copy paste brush matchblock | undo down redo downoff | pan zoomrt zoomwin zoomprev | props dc palettes sheet markup calc | help')}</cad-band>
                <cad-band>
                    ${tools('textstyle')}<cad-select label="文字样式" value="Standard"></cad-select>
                    ${tools('| dimstyle')}<cad-select label="标注样式" value="ISO-25"></cad-select>
                    ${tools('| tablestyle')}<cad-select label="表格样式" value="Standard"></cad-select>
                </cad-band>
            </div>
            <div class="row">
                <cad-band><cad-select label="工作空间" value="AutoCAD 经典" style="--w:174px;--pad:8px;--size:11px"></cad-select>${tools('gear house')}</cad-band>
                <cad-band>
                    ${tools('layers')}
                    <cad-select label="图层" value="0" style="--w:300px;--pad:85px">
                        <span class="combo">
                            <cad-icon name="bulb"></cad-icon><cad-icon name="sun"></cad-icon><cad-icon name="freeze"></cad-icon><cad-icon name="lock"></cad-icon><cad-icon name="swatch" size="16"></cad-icon>
                        </span>
                    </cad-select>
                    ${tools('layercur layerprev')}
                </cad-band>
                <cad-band>${tools('namedview | vtop vbottom vleft vright vfront vback | iso1 iso2 iso3 iso4 | camera | back')}<cad-select label="相机" plain disabled style="--w:60px"></cad-select></cad-band>
            </div>
            <div class="row">
                <cad-band>${tools('union subtract intersect | extrude moveface offsetface deleteface rotateface taperface copyface colorface | copyedge coloredge | imprint clean separate shell check')}</cad-band>
                <cad-band>
                    ${tools('dimlinear dimaligned dimarc dimord | dimradius dimjog dimdia dimang | qdim dimbase dimcont | leader tolerance center | dimedit dimtedit dimupdate')}
                    <cad-select class="apart" label="当前标注样式" value="ISO-25"></cad-select>${tools('dimstyle')}
                </cad-band>
            </div>
            <div class="row">
                <cad-band>${tools('vpdialog vpsingle vppoly vpobject vpclip |')}<cad-select label="视口比例" disabled></cad-select></cad-band>
                <cad-band>${tools('hide | render | light lightlist material mapping | environment | advrender')}</cad-band>
                <cad-band>${tools('track from | endpoint midpoint inters appint ext | osncenter quad tangent | perp parallel insertion nodesnap | nearest none | magnet')}</cad-band>
            </div>
        `;
    }
}
customElements.define('cad-toolbars', CadToolbars);

class CadCanvas extends HTMLElement {
    connectedCallback() {
        this.attachShadow({ mode: 'open' }).innerHTML = `
            <style>
                :host {
                    display: flex;
                    flex: 1;
                    min-width: 0;
                    min-height: 0;
                    background: #c0c0c0;
                    border-top: 2px solid #7c756c;
                    border-left: 2px solid #7c756c;
                    border-right: 1px solid #000;
                    border-bottom: 2px solid #000;
                }
                svg { flex: 1; width: 0; min-height: 0; }
                text { font: 11px "Liberation Sans", sans-serif; }
            </style>
            <svg viewBox="61 167 928 464" role="img" aria-label="三维模型">
                <g shape-rendering="crispEdges">
                    <path d="M607 226L620 236L645 257L657 278L660 300L655 323L638 346L618 359L604 362L588 380L445 561L418 592L414 601L390 628L380 622L402 598L581 378L617 327Z" fill="#000"/>
                    <path d="M208 411L238 391L252 386L480 261L514 243L531 225L554 215L580 214L600 221L620 237L630 257L633 280L627 307L623 327L581 380L445 549L402 601L380 622L352 586L370 564L382 538L385 507L379 480L365 457L349 443L318 427L285 425L260 431L236 446Z" fill="#7d7d7d"/>
                    <path d="M236 446L260 431L285 425L318 427L343 440L349 443L325 432L298 432L272 438L246 453Z" fill="#000"/>
                    <path d="M568 244L583 245L597 257L603 262L590 270L567 290L562 314L547 310L536 318L525 304L535 296L533 277L537 262L550 248Z" fill="#000"/>
                    <path d="M603 262L590 264L577 268L563 282L560 297L562 314L580 313L593 303L602 287Z" fill="#c0c0c0"/>
                    <path d="M508 342L525 329L532 333L548 342L568 344L590 341L613 327L623 317V327L612 338L592 346L577 349L560 348L545 343L530 334L515 346Z" fill="#000"/>
                    <path d="M376 404L391 415L398 423M402 429L412 442L418 455M420 460L425 471L428 487" fill="none" stroke="#000" stroke-width="1.500"/>
                    <path d="M429 491L431 513L429 540L422 570L407 597L402 601L420 570L428 540L430 513Z" fill="#000" stroke="#000"/>
                    <path d="M296 517h1v1h-1Z" fill="#000"/>
                </g>
                <circle cx="578" cy="287" r="4" fill="#6ff3f5"/>
                <path d="M576 284L597 266" stroke="#d92020" stroke-width="3"/>
                <path d="M603 261L598 272L590 264Z" fill="#f02a22"/>
                <path d="M576 285L590 303" stroke="#0a9d12" stroke-width="3"/>
                <path d="M598 312L586 304L593 299Z" fill="#0dbb18"/>
                <text x="604" y="257" fill="#c52a26">X</text>
                <text x="584" y="281" fill="#326bb4">Z</text>
                <text x="599" y="299" fill="#20c528">Y</text>
                <path d="M734 444L776 408" stroke="#54b4bb"/>
                <path d="M738 418L771 459" stroke="#b54bb9"/>
                <rect x="745" y="428" width="6" height="6" fill="none" stroke="#8b468c"/>
            </svg>
        `;
    }
}
customElements.define('cad-canvas', CadCanvas);

class CadTabs extends HTMLElement {
    connectedCallback() {
        const tab = (t, on) => `<button class="tab ${on ? 'on' : ''}" type="button"><svg viewBox="0 0 42 15" preserveAspectRatio="none"><path d="M0 0L5 14H36L41 0" fill="${on ? '#000' : '#ece9d8'}" stroke="#000" stroke-width="1.500"/></svg><span>${mix(t)}</span></button>`;
        this.attachShadow({ mode: 'open' }).innerHTML = `
            <style>
                :host { display: flex; height: 16px; padding-left: 2px; background: var(--face); }
                ${MIX_CSS}
                .nav { width: 18px; padding: 0; border: solid; border-width: 0 1px 1px 0; border-color: var(--shade); background: #f5f3e9; }
                .nav svg { display: block; margin: auto; }
                .tab { display: grid; width: 44px; padding: 0; margin-right: -3px; border: 0; background: none; font-family: inherit; font-size: 10px; line-height: 15px; color: #000; }
                .tab svg { grid-area: 1 / 1; width: 100%; height: 15px; }
                .tab span { grid-area: 1 / 1; }
                .on { color: #fff; }
            </style>
            ${['M3.500 3V12M11 3V12L5 7.500Z', 'M10 3V12L5 7.500Z', 'M5 3V12L10 7.500Z', 'M11.500 3V12M4 3V12L10 7.500Z'].map((d, i) => `<button class="nav" type="button" aria-label="布局翻页${i + 1}"><svg width="15" height="15"><path d="${d}" stroke="#000"/></svg></button>`).join('')}
            ${tab('模型', true)}${tab('布局1')}${tab('布局2')}
        `;
    }
}
customElements.define('cad-tabs', CadTabs);

class CadCommand extends HTMLElement {
    connectedCallback() {
        this.attachShadow({ mode: 'open' }).innerHTML = `
            <style>
                :host {
                    --cjk: 16px;
                    display: flex;
                    gap: 3px;
                    padding: 9px 9px 2px 7px;
                    background: var(--face);
                    border-top: 2px solid #1c1a18;
                    border-bottom: 1px solid var(--shade);
                    font-size: 13px;
                }
                ${MIX_CSS}
                .grip { width: 3px; margin-right: 2px; border: solid; border-width: 0 1px; border-color: #fff var(--shade); box-shadow: -3px 0 0 -1px var(--shade); }
                .box { flex: 1; min-width: 0; background: #fff; border-top: 1px solid #000; border-left: 1px solid #000; }
                .log, .entry { display: flex; height: 22px; align-items: center; }
                .log { border-bottom: 1px solid #9d9a8f; }
                .log p { flex: 1; margin: 0 0 4px 1px; white-space: pre; line-height: 18px; }
                .entry { height: 18px; }
                label { padding-left: 1px; line-height: 18px; }
                input { flex: 1; min-width: 0; border: 0; padding: 0; font: inherit; outline: 0; }
                .spin { display: grid; }
                .spin button { width: 16px; height: 11px; }
                button { padding: 0; border: 1px solid #9fb5e8; border-radius: 2px; background: #c6d6fc; }
                button svg { display: block; margin: auto; }
                .scroll { display: flex; height: 18px; padding: 0 18px 0 1px; background: linear-gradient(90deg, #fdfdfb 78%, #ece9d8 0); }
                .scroll button { width: 16px; height: 17px; }
                .scroll button:last-child { margin-left: 16px; }
            </style>
            <span class="grip"></span>
            <div class="box">
                <div class="log">
                    <p>${mix('Autodesk DWG。  此文件上次由 Autodesk 应用程序或 Autodesk 许可的应用程序保存，是可靠的 DWG。')}</p>
                    <div class="spin">
                        <button type="button" aria-label="向上"><svg width="8" height="6"><path d="M1 5L4 2L7 5" fill="none" stroke="#4d6185" stroke-width="2"/></svg></button>
                        <button type="button" aria-label="向下"><svg width="8" height="6"><path d="M1 1L4 4L7 1" fill="none" stroke="#4d6185" stroke-width="2"/></svg></button>
                    </div>
                </div>
                <div class="entry">
                    <label for="cmd">${mix('命令')}:</label>
                    <input id="cmd" type="text">
                    <div class="scroll">
                        <button type="button" aria-label="向左"><svg width="9" height="11"><path d="M6 1L2 5.500L6 10" fill="none" stroke="#4d6185" stroke-width="2"/></svg></button>
                        <button type="button" aria-label="滑块"><svg width="9" height="11"><path d="M1.500 3V9M3.500 3V9M5.500 3V9M7.500 3V9" stroke="#8aa4e6"/></svg></button>
                        <button type="button" aria-label="向右"><svg width="9" height="11"><path d="M3 1L7 5.500L3 10" fill="none" stroke="#4d6185" stroke-width="2"/></svg></button>
                    </div>
                </div>
            </div>
        `;
    }
}
customElements.define('cad-command', CadCommand);

class CadStatus extends HTMLElement {
    connectedCallback() {
        const modes = [['捕捉'], ['栅格'], ['正交'], ['极轴', 1], ['对象捕捉', 1], ['对象追踪', 1], ['DUCS', 1], ['DYN', 1], ['线宽'], ['模型', 1]];
        this.attachShadow({ mode: 'open' }).innerHTML = `
            <style>
                :host { display: flex; align-items: center; height: 25px; padding: 0 1px 0 5px; gap: 4px; background: var(--face); font-size: 10px; }
                ${MIX_CSS}
                .coords { box-sizing: border-box; width: 199px; height: 18px; border: 1px solid; border-color: var(--shade) #fff #fff var(--shade); line-height: 18px; white-space: pre; }
                .modes { display: flex; gap: 4px; flex: 1; }
                .modes button { height: 19px; padding: 0 1px; border: 1px solid; border-color: #fff var(--shade) var(--shade) #fff; background: none; font: inherit; line-height: 19px; color: #000; white-space: nowrap; }
                .modes .on { border-color: #000 #fff #fff #000; }
                .tray { display: flex; align-items: center; gap: 2px; height: 19px; padding-left: 3px; border: 1px solid; border-color: var(--shade) transparent transparent var(--shade); }
            </style>
            <span class="coords">6.1483,   34.5769 , 0.0000</span>
            <div class="modes">${modes.map(m => `<button type="button" aria-pressed="${!!m[1]}" class="${m[1] ? 'on' : ''}">${mix(m[0])}</button>`).join('')}</div>
            <div class="tray">
                <cad-icon name="dish"></cad-icon><cad-icon name="padlock"></cad-icon><cad-icon name="plotok"></cad-icon>
                <cad-tool icon="menu"></cad-tool><cad-icon name="screen"></cad-icon><cad-icon name="grip" size="12"></cad-icon>
            </div>
        `;
    }
}
customElements.define('cad-status', CadStatus);

class XpTaskbar extends HTMLElement {
    connectedCallback() {
        const tasks = [['people', '175摩托车友会', 'hot'], ['note', '蒲公英的半海', 'hot'], ['browser', '新标签页 - 世...', ''], ['app', 'AutoCAD 2007 -...', 'on']];
        this.attachShadow({ mode: 'open' }).innerHTML = `
            <style>
                :host {
                    position: relative;
                    display: flex;
                    height: 30px;
                    background: linear-gradient(#1f4fc0, #3b7df0 10%, #245edb 25%, #2460dc 85%, #1941a5);
                    color: #fff;
                    font-size: 10px;
                }
                ${MIX_CSS}
                .start {
                    display: flex;
                    align-items: center;
                    gap: 8px;
                    width: 97px;
                    padding: 0 0 0 9px;
                    border: 0;
                    border-radius: 0 10px 12px 0;
                    background: linear-gradient(#2f7a2e, #5cb254 12%, #3c983b 30%, #369235 80%, #246b26);
                    box-shadow: inset -4px 0 6px #1e5a20;
                    color: #fff;
                    font: italic 18px "Noto Sans CJK SC", sans-serif;
                    line-height: 24px;
                    text-shadow: 1px 1px 2px #123f14;
                }
                .quick { display: flex; align-items: center; gap: 6px; width: 94px; padding-left: 11px; box-sizing: border-box; }
                .tasks { display: flex; gap: 2px; flex: 1; padding: 3px 0 2px; min-width: 0; }
                .task {
                    display: flex;
                    align-items: center;
                    gap: 4px;
                    flex: 0 1 145px;
                    min-width: 0;
                    padding: 0 8px;
                    border: 0;
                    border-radius: 3px;
                    background: linear-gradient(#5f9bff, #3c81f3 20%, #3a7bee);
                    color: #fff;
                    font: inherit;
                    white-space: nowrap;
                    overflow: hidden;
                }
                .hot { background: linear-gradient(#f5a044, #e07b0c 20%, #dd780a); }
                .on { background: #1d4fb6; box-shadow: inset 1px 1px 2px #0e2f80; }
                .lang { display: flex; align-items: center; margin-left: 7px; }
                .tray {
                    display: flex;
                    align-items: center;
                    width: 202px;
                    padding-left: 8px;
                    box-sizing: border-box;
                    background: linear-gradient(#1577d0, #1fa0f5 12%, #1292ea 40%, #1290e8 85%, #0f6bb8);
                    border-left: 1px solid #0b3e9a;
                }
                .tray time { margin-left: 6px; }
                .mark { position: absolute; right: 4px; bottom: 1px; display: grid; justify-items: end; pointer-events: none; }
                .brush {
                    display: flex;
                    gap: 8px;
                    padding-right: 8px;
                    color: rgba(25, 30, 35, .8);
                    font: italic 20px/26px "Noto Sans CJK SC", sans-serif;
                }
                .brush .red { color: #e0433c; font-size: 13px; }
                .url { padding: 0 3px; background: rgba(25, 60, 88, .75); font: bold 14px/19px "Liberation Mono", monospace; color: #eef6fa; }
            </style>
            <button class="start" type="button"><cad-icon name="flag" size="20"></cad-icon>开始</button>
            <div class="quick"><cad-icon name="ie"></cad-icon><cad-icon name="plus"></cad-icon></div>
            <div class="tasks">
                ${tasks.map(t => `<button type="button" class="task ${t[2]}"><cad-icon name="${t[0]}" size="17"></cad-icon><span>${mix(t[1])}</span></button>`).join('')}
                <span class="lang"><cad-icon name="keyboard"></cad-icon></span>
            </div>
            <div class="tray">
                ${['penguin', 'penguin', 'penguin', 'monitors', 'warn', 'shield', 'ball', 'plus'].map(n => `<cad-icon name="${n}"></cad-icon>`).join('')}
                <time>22:40</time>
            </div>
            <div class="mark">
                <span class="brush"><span>天</span><span>台</span><span class="red">之</span><span>窗</span></span>
                <span class="url">www.zjtt.cn</span>
            </div>
        `;
    }
}
customElements.define('xp-taskbar', XpTaskbar);

class CadApp extends HTMLElement {
    connectedCallback() {
        this.attachShadow({ mode: 'open' }).innerHTML = `
            <style>
                :host { display: flex; flex-direction: column; height: 100vh; }
                .window {
                    display: flex;
                    flex: 1;
                    flex-direction: column;
                    min-height: 0;
                    margin: 6px 2px 0 3px;
                    border: solid #0f3fc4;
                    border-width: 1px 3px 2px;
                    border-radius: 8px 8px 0 0;
                    overflow: hidden;
                }
                .work { display: flex; flex: 1; min-height: 0; background: var(--face); }
                .left { display: flex; align-items: flex-start; width: 53px; }
                .view { display: flex; flex-direction: column; flex: 1; min-width: 0; padding-bottom: 6px; }
                .right { padding: 0 1px 0 2px; }
            </style>
            <div class="window">
                <cad-title></cad-title>
                <cad-menu></cad-menu>
                <cad-toolbars></cad-toolbars>
                <div class="work">
                    <div class="left">
                        <cad-band vertical>${tools('line xline pline polygon rectangle arc circle cloud spline ellipse earc insert block point hatch gradient region table mtext')}</cad-band>
                        <cad-band vertical>${tools('erase copyobj mirror offset array move rotate scale stretch trim extend breakpt break join chamfer fillet explode')}</cad-band>
                    </div>
                    <div class="view">
                        <cad-canvas></cad-canvas>
                        <cad-tabs></cad-tabs>
                    </div>
                    <div class="right">
                        <cad-band vertical>${tools('front behind above under')}</cad-band>
                    </div>
                </div>
                <cad-command></cad-command>
                <cad-status></cad-status>
            </div>
            <xp-taskbar></xp-taskbar>
        `;
    }
}
customElements.define('cad-app', CadApp);
</script>
</body>
</html>
